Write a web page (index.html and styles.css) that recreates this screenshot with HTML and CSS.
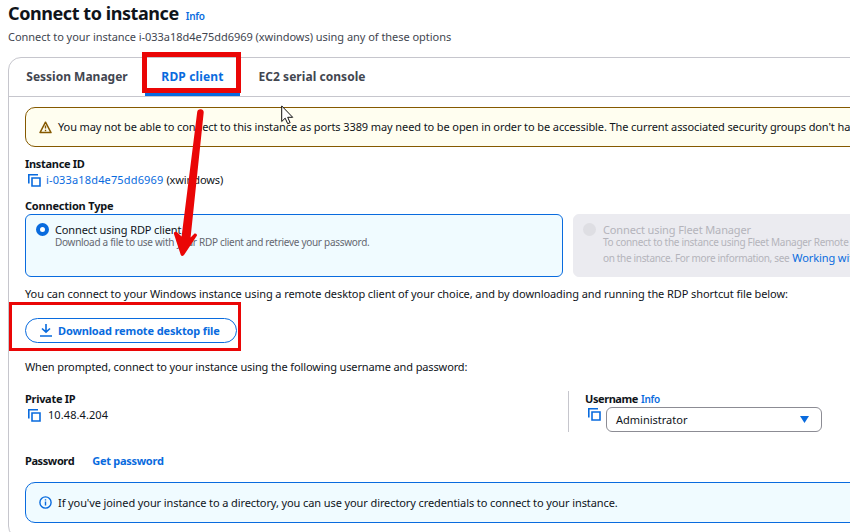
FILE: index.html
```html
<!DOCTYPE html>
<html lang="en">
<head>
<meta charset="utf-8">
<title>Connect to instance</title>
<link rel="stylesheet" href="styles.css">
</head>
<body>
<svg class="defs" aria-hidden="true">
  <symbol id="copy" viewBox="0 0 13 13"><path d="M.8 9.500V.8H10M4 4h8v8H4z" fill="none" stroke="currentColor" stroke-width="1.6"/></symbol>
</svg>
<main class="page">
  <header>
    <div class="heading"><h1>Connect to instance</h1><a class="info title-info">Info</a></div>
    <p class="subtitle">Connect to your instance i-033a18d4e75dd6969 (xwindows) using any of these options</p>
  </header>
  <section class="panel">
    <nav class="tabs">
      <a class="tab t1">Session Manager</a>
      <a class="tab t2 active">RDP client</a>
      <a class="tab t3">EC2 serial console</a>
    </nav>
    <div class="content">
      <div class="alert warning">
        <svg class="alert-icon" viewBox="0 0 13 13"><path d="M6.5 1.2 12 11.6H1z" fill="none" stroke="currentColor" stroke-width="1.5" stroke-linejoin="round"/><path d="M6.5 4.6v3M6.5 8.7v1.5" stroke="currentColor" stroke-width="1.4"/></svg>
        <span class="warn-text">You may not be able to connect to this instance as ports 3389 may need to be open in order to be accessible. The current associated security groups don't have</span>
      </div>
      <div class="field instance">
        <div class="label l-instance">Instance ID</div>
        <div class="value"><svg class="copy"><use href="#copy"/></svg><a class="id">i-033a18d4e75dd6969</a><span class="name">(xwindows)</span></div>
      </div>
      <div class="label l-type">Connection Type</div>
      <div class="cards">
        <div class="card selected">
          <span class="radio"></span>
          <div>
            <div class="card-title">Connect using RDP client</div>
            <div class="card-desc cd1">Download a file to use with your RDP client and retrieve your password.</div>
          </div>
        </div>
        <div class="card disabled">
          <span class="radio"></span>
          <div>
            <div class="card-title">Connect using Fleet Manager</div>
            <div class="card-desc cd2">To connect to the instance using Fleet Manager Remote</div>
            <div class="card-desc second"><span class="cd3">on the instance. For more information, see</span><a class="more">Working with</a></div>
          </div>
        </div>
      </div>
      <p class="para p1">You can connect to your Windows instance using a remote desktop client of your choice, and by downloading and running the RDP shortcut file below:</p>
      <button class="download"><svg class="down-icon" viewBox="0 0 12 13"><path d="M6 0v8M2 4.5 6 8.2 10 4.5M0 12h12" fill="none" stroke="currentColor" stroke-width="1.6"/></svg><span>Download remote desktop file</span></button>
      <p class="para p2">When prompted, connect to your instance using the following username and password:</p>
      <div class="columns">
        <div class="private">
          <div class="label l-ip">Private IP</div>
          <div class="value"><svg class="copy"><use href="#copy"/></svg><span class="ip">10.48.4.204</span></div>
        </div>
        <div class="user">
          <div class="label"><span class="l-user">Username</span><a class="info user-info">Info</a></div>
          <div class="user-row"><svg class="copy"><use href="#copy"/></svg>
            <div class="select"><span>Administrator</span><svg class="caret" viewBox="0 0 9 7"><path d="M0 0h9L4.500 7z" fill="currentColor"/></svg></div>
          </div>
        </div>
      </div>
      <div class="password"><span class="label l-pass">Password</span><a class="get">Get password</a></div>
      <div class="alert notice">
        <svg class="alert-icon" viewBox="0 0 13 13"><circle cx="6.5" cy="6.5" r="5.6" fill="none" stroke="currentColor" stroke-width="1.4"/><path d="M6.5 3.2v1.4M6.5 5.6v4" stroke="currentColor" stroke-width="1.4"/></svg>
        <span class="notice-text">If you've joined your instance to a directory, you can use your directory credentials to connect to your instance.</span>
      </div>
    </div>
  </section>
</main>
<div class="mark mark-tab"></div>
<div class="mark mark-download"></div>
<svg class="arrow" viewBox="0 0 40 160"><path d="M24.200 11q.5-3 3.500-2.800 3 .2 3 3.200L17.600 136.500 21.500 132.500q2.500-.5 2.500 2L11 154q-2 2-3.200 0L.8 132.500q.2-2.500 3-1.500l4.800 4.500z" fill="#ea0606"/></svg>
<svg class="cursor" viewBox="0 0 13 20"><path d="M.7.9v15.600l3.500-3.300 2.500 5.500 2.400-1-2.400-5.400h5z" fill="#fff" stroke="#111" stroke-width="1"/></svg>
</body>
</html>
```
FILE: styles.css
```css
* { box-sizing: border-box; }
body { margin: 0; width: 850px; height: 532px; overflow: hidden; position: relative; background: #fff; color: #0f141a; font: 11px/16px "Noto Sans", sans-serif; white-space: nowrap; }
h1, p { margin: 0; }
.defs { display: block; width: 0; height: 0; }
a { color: #096bde; }
.page { width: 850px; height: 532px; overflow: hidden; padding-left: 8px; }
.heading { display: flex; align-items: baseline; height: 29px; }
h1 { font-size: 18px; line-height: 27px; letter-spacing: -.43px; }
.info { font-size: 10px; font-weight: 600; letter-spacing: -.3px; }
.title-info { margin-left: 7px; }
.subtitle { color: #424650; height: 28px; letter-spacing: -.035px; }
.panel { width: 1112px; border: 1px solid #c6c6cd; border-radius: 13px; height: 482px; }
.tabs { display: flex; height: 39px; border-bottom: 1px solid #c6c6cd; }
.tab { display: flex; align-items: center; justify-content: center; font-size: 12px; font-weight: 700; color: #424650; height: 38px; }
.t1 { width: 136px; }
.t2 { width: 95px; border-bottom: 3px solid #096bde; padding-top: 3px; letter-spacing: .15px; }
.t3 { width: 144px; letter-spacing: .05px; }
.active { color: #096bde; }
.content { padding: 10px 16px; }
.alert { display: flex; align-items: center; border: 1px solid; border-radius: 10px; height: 40px; padding-left: 13px; }
.alert-icon { width: 13px; height: 13px; margin-right: 6px; flex: none; }
.warning { background: #fffef0; border-color: #855900; color: #855900; }
.alert span { color: #0f141a; letter-spacing: -.1px; }
.notice { background: #f0fbff; border-color: #096bde; color: #096bde; height: 41px; }
.instance { margin-top: 9px; }
.label { font-weight: 700; letter-spacing: -.3px; }
.value { display: flex; align-items: center; height: 16px; }
.copy { width: 13px; height: 13px; color: #096bde; margin-left: 3px; flex: none; }
.id { margin-left: 5px; letter-spacing: .15px; }
.name { margin-left: 3px; letter-spacing: -.1px; }
.l-type { margin-top: 10px; letter-spacing: -.2px; }
.cards { display: flex; gap: 10px; }
.card { flex: none; width: 538px; height: 63px; border-radius: 6px; display: flex; padding: 8px 0 0 10px; border: 1px solid; }
.selected { background: #f0fbff; border-color: #096bde; }
.disabled { background: #ebebf0; border-color: #ebebf0; color: #b4b4bb; padding-left: 9px; }
.radio { width: 13px; height: 13px; border-radius: 50%; margin: 0 6px 0 0; }
.disabled .radio { background: #dedee3; margin-right: 7px; }
.selected .radio { border: 4px solid #096bde; background: #fff; }
.card-title { line-height: 13px; letter-spacing: -.12px; }
.card-desc { font-size: 10px; line-height: 13px; color: #656871; letter-spacing: -.29px; }
.disabled .card-desc { color: #b4b4bb; }
.card .second { display: flex; line-height: 18px; align-items: center; letter-spacing: -.33px; }
.disabled .more { font-size: 11px; margin-left: 3px; letter-spacing: -.1px; }
.p1 { margin-top: 9px; letter-spacing: -.083px; }
.download { display: flex; align-items: center; margin-top: 16px; width: 212px; height: 25px; border: 1px solid #096bde; border-radius: 13px; background: #fff; color: #096bde; padding: 0 0 0 14px; font: 700 11px/16px "Noto Sans", sans-serif; letter-spacing: -.14px; }
.down-icon { width: 12px; height: 13px; margin-right: 6px; }
.p2 { margin-top: 16px; letter-spacing: -.125px; }
.columns { display: flex; height: 41px; margin-top: 16px; }
.private { width: 544px; border-right: 1px solid #c6c6cd; }
.user { padding-left: 16px; }
.l-user { letter-spacing: -.42px; }
.user-info { margin-left: 3px; }
.user-row { display: flex; gap: 5px; }
.user-row .copy { margin-top: 1px; }
.ip { margin-left: 7px; letter-spacing: .08px; }
.select { width: 216px; height: 25px; border: 1px solid #8c8c94; border-radius: 6px; display: flex; align-items: center; justify-content: space-between; padding: 0 12px 0 9px; }
.caret { width: 9px; height: 7px; color: #096bde; }
.password { display: flex; align-items: center; margin: 21px 0 13px; }
.l-pass { letter-spacing: -.4px; }
.get { font-weight: 700; margin-left: 18px; letter-spacing: -.28px; }
.mark { position: absolute; border: solid #ea0606; }
.mark-tab { left: 142px; top: 52px; width: 99px; height: 41px; border-width: 5px; }
.mark-download { left: 9px; top: 302px; width: 232px; height: 49px; border-width: 3px; }
.arrow { position: absolute; left: 173px; top: 101px; width: 40px; height: 160px; }
.cursor { position: absolute; left: 281px; top: 105px; width: 13px; height: 20px; }
```
